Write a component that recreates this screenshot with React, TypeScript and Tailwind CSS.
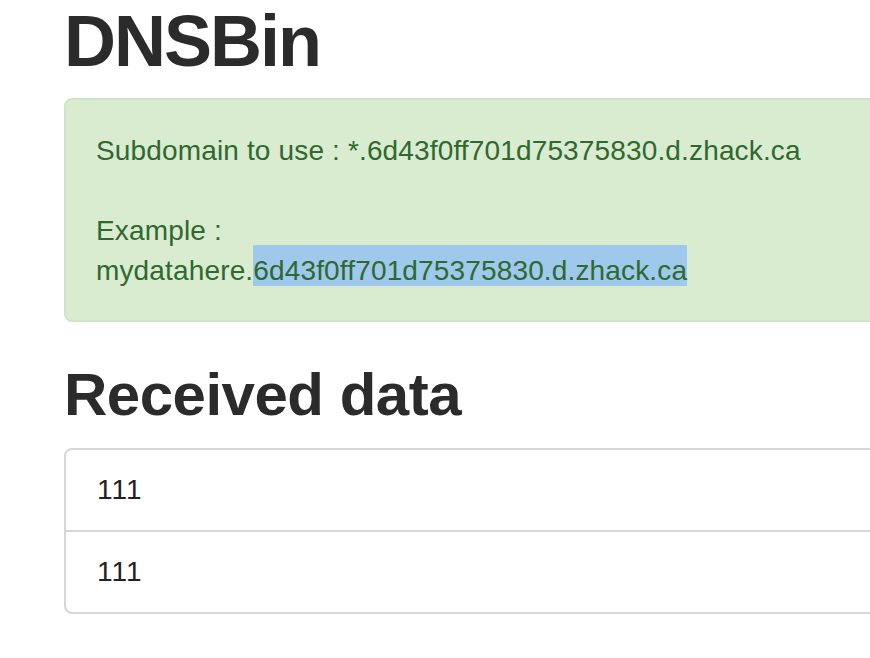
import React from "react";

const subdomain = "6d43f0ff701d75375830.d.zhack.ca";
const rows = ["111", "111"];

export default function App() {
  return (
    <div
      className="w-[870px] h-[658px] overflow-hidden bg-white text-[#2b2b2b]"
      style={{ fontFamily: '"Liberation Sans", Arial, Helvetica, sans-serif' }}
    >
      <div className="pl-[64px] w-[1100px]">
        <h1 className="pt-[2px] mb-[18px] text-[72px] leading-[78px] font-bold tracking-[-2px]">
          DNSBin
        </h1>

        <div className="mb-[40px] rounded-[8px] border-2 border-[#cfe6c4] bg-[#d9ecd0] px-[30px] pt-[31px] pb-[29px] text-[28px] leading-[40px] tracking-[0.15px] text-[#30692f]">
          <p>Subdomain to use : *.{subdomain}</p>
          <br />
          <p>Example :</p>
          <p>
            mydatahere.
            <span className="bg-[#9ec8ec] pt-[10px]">{subdomain}</span>
          </p>
        </div>

        <h2 className="mb-[20px] text-[60px] leading-[66px] font-bold tracking-[-0.5px]">
          Received data
        </h2>

        <ul className="flex flex-col">
          {rows.map((row, i) => (
            <li
              key={i}
              className={
                "border-2 border-[#d6d6d6] bg-white pl-[31px] pr-[30px] py-[20px] text-[28px] leading-[40px] tracking-[1px] text-[#222] " +
                (i === 0 ? "rounded-t-[8px]" : "") +
                (i === rows.length - 1 ? " rounded-b-[8px]" : " -mb-[2px]")
              }
            >
              {row}
            </li>
          ))}
        </ul>
      </div>
    </div>
  );
}
